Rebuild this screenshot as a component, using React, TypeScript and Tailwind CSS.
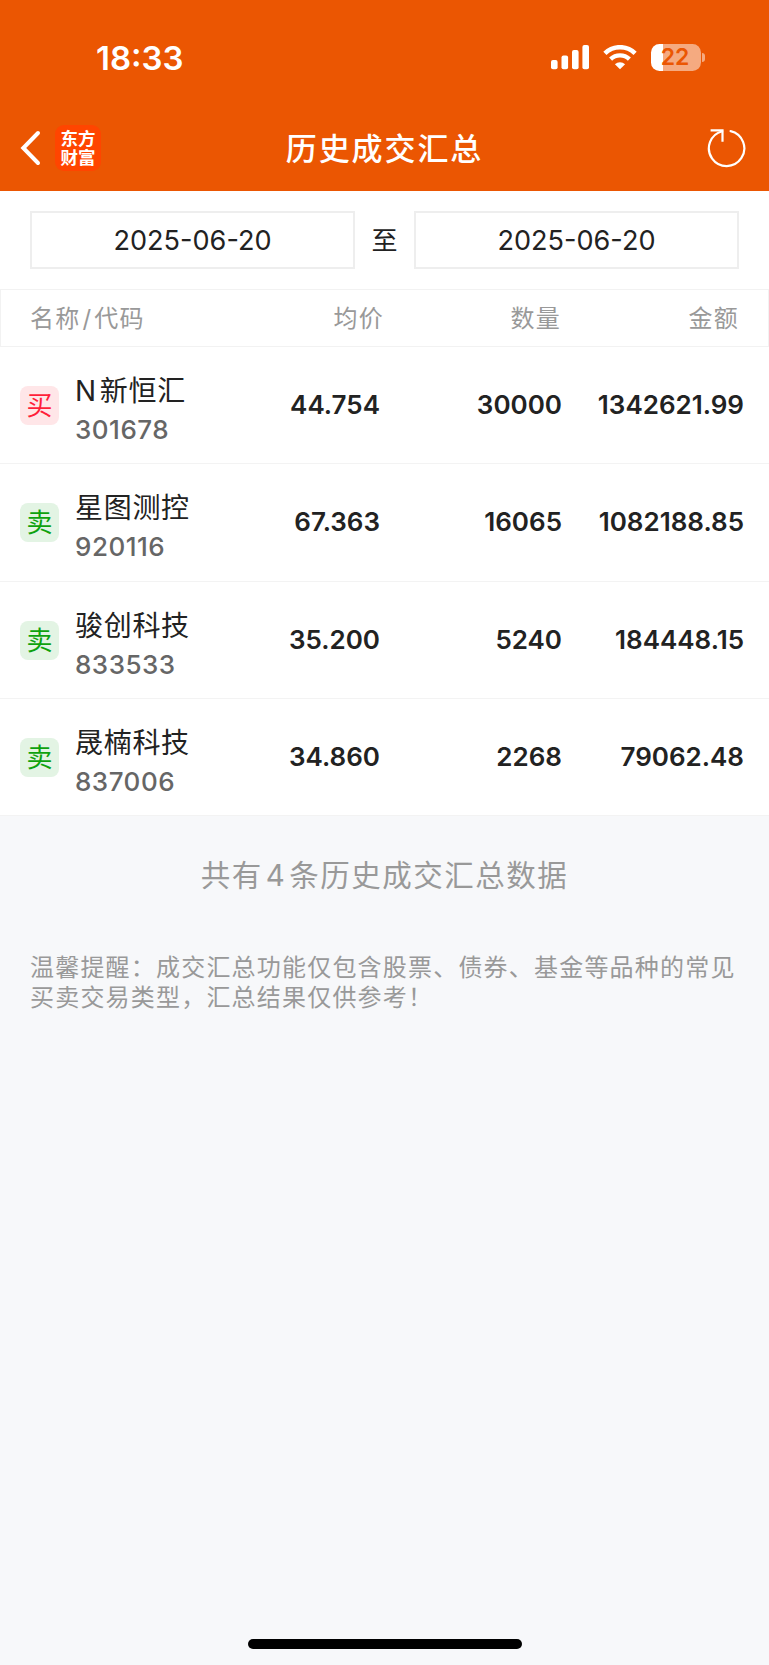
import clsx from "clsx";

interface Deal {
  side: "buy" | "sell";
  prefix?: string;
  name: string;
  code: string;
  price: string;
  count: string;
  amount: string;
}

const deals: Deal[] = [
  { side: "buy", prefix: "N", name: "新恒汇", code: "301678", price: "44.754", count: "30000", amount: "1342621.99" },
  { side: "sell", name: "星图测控", code: "920116", price: "67.363", count: "16065", amount: "1082188.85" },
  { side: "sell", name: "骏创科技", code: "833533", price: "35.200", count: "5240", amount: "184448.15" },
  { side: "sell", name: "晟楠科技", code: "837006", price: "34.860", count: "2268", amount: "79062.48" },
];

function StatusBar() {
  return (
    <div className="flex h-[104px] items-start justify-between pt-[44px] pr-[64px] pl-[96px] text-white">
      <span className="text-[33px] leading-[28px] font-semibold">18:33</span>
      <div className="flex items-start">
        <svg width="38" height="25" viewBox="0 0 38 25" fill="currentColor" className="mt-px">
          <rect x="0" y="15" width="6.6" height="9.3" rx="2" />
          <rect x="10.5" y="10.5" width="6.6" height="13.8" rx="2" />
          <rect x="21" y="5" width="6.6" height="19.3" rx="2" />
          <rect x="31.4" y="0" width="6.6" height="24.3" rx="2" />
        </svg>
        <svg width="34" height="25" viewBox="0 0 34 25" fill="none" stroke="currentColor" className="mt-px ml-[13.5px]">
          <path d="M1.9 8.3a21.8 21.8 0 0 1 30.2 0" strokeWidth="4.6" />
          <path d="M7.6 14.1a13.6 13.6 0 0 1 18.8 0" strokeWidth="4.4" />
          <path d="M17 24.3l-5.1-5.1a7.4 7.4 0 0 1 10.2 0z" fill="currentColor" stroke="none" />
        </svg>
        <div className="ml-[14.5px] flex items-center">
          <div className="flex h-[27px] w-[50px] items-center justify-center rounded-[8.5px] bg-linear-to-r from-white from-[24%] to-[#f5aa80] to-[24%]">
            <span className="mr-[2px] text-[23px] leading-[27px] font-semibold text-[#eb5602]">22</span>
          </div>
          <div className="ml-px h-[9px] w-[3px] rounded-r-full bg-[#f5aa80]" />
        </div>
      </div>
    </div>
  );
}

function NavBar() {
  return (
    <div className="flex h-[87px] items-center justify-between pt-[1px] pr-[22px] pl-[20px] text-white">
      <div className="flex w-[120px] items-center">
        <svg width="22" height="36" viewBox="0 0 22 36" fill="none" stroke="currentColor" strokeWidth="4" strokeLinecap="round" strokeLinejoin="miter">
          <path d="M18 3L3.3 18L18 33" />
        </svg>
        <div className="ml-[13px] flex h-[46px] w-[46px] flex-col items-center justify-center rounded-[9px] bg-[#ff4500] text-[17.5px] leading-[19px] font-bold">
          <span>东方</span>
          <span>财富</span>
        </div>
      </div>
      <h1 className="pt-[2px] pl-[2px] text-[31px] leading-[40px] font-medium tracking-[1.9px]">历史成交汇总</h1>
      <div className="flex w-[120px] justify-end">
        <svg width="40" height="42" viewBox="0 0 40 42" fill="none" stroke="currentColor" strokeWidth="2.2" className="mb-[2px]">
          <path d="M23.6 5.1A17.7 17.7 0 1 1 15.2 5.2" strokeLinecap="round" />
          <path d="M3.6 4.4H15.5V15.8" strokeLinejoin="miter" />
        </svg>
      </div>
    </div>
  );
}

function DateBox({ value }: { value: string }) {
  return (
    <div className="flex h-[58px] w-[325px] items-center justify-center border-2 border-[#eee] pt-[2px] text-[27.1px] leading-[34px]">
      {value}
    </div>
  );
}

function DealRow({ deal }: { deal: Deal }) {
  return (
    <div className="flex h-[117.3px] border-b border-[#f3f3f3] pl-[20px] text-[#222]">
      <div
        className={clsx(
          "mt-[39px] flex h-[39px] w-[39px] items-center justify-center rounded-[8px] pt-[1px] text-[26px] leading-[38px]",
          deal.side === "buy" ? "bg-[#ffe6e8] text-[#ff1f3a]" : "bg-[#e3f4e4] text-[#0ea20e]"
        )}
      >
        {deal.side === "buy" ? "买" : "卖"}
      </div>
      <div className="ml-[16px] w-[165px] pt-[25px]">
        <div className="text-[28px] leading-[38px] tracking-[0.7px]">
          {deal.prefix && <span className="mr-[3px]">{deal.prefix}</span>}
          {deal.name}
        </div>
        <div className="text-[26px] leading-[39px] font-medium tracking-[0.5px] text-[#666]">{deal.code}</div>
      </div>
      <div className="w-[140px] pt-[38px] text-right text-[26px] leading-[39px] font-semibold">{deal.price}</div>
      <div className="w-[182px] pt-[38px] text-right text-[26px] leading-[39px] font-semibold">{deal.count}</div>
      <div className="w-[182px] pt-[38px] text-right text-[26px] leading-[39px] font-semibold">{deal.amount}</div>
    </div>
  );
}

export default function App() {
  return (
    <div className="flex h-[1665px] w-[769px] flex-col bg-[#f7f8fa] font-['Inter','Noto_Sans_CJK_SC',sans-serif]">
      <header className="bg-[#eb5602]">
        <StatusBar />
        <NavBar />
      </header>

      <section className="flex h-[98px] items-center justify-between bg-white px-[30px] text-[#222]">
        <DateBox value="2025-06-20" />
        <span className="pt-[1px] text-[26px] leading-[34px]">至</span>
        <DateBox value="2025-06-20" />
      </section>

      <section className="bg-white">
        <div className="flex h-[58px] items-center border border-[#f2f2f2] pt-[2px] pl-[29px] text-[24px] tracking-[1.2px] text-[#999]">
          <span className="w-[200px]">
            名称<span className="mx-[2px]">/</span>代码
          </span>
          <span className="w-[154px] text-right">均价</span>
          <span className="w-[177px] text-right">数量</span>
          <span className="w-[178px] text-right">金额</span>
        </div>
        {deals.map((deal) => (
          <DealRow key={deal.code} deal={deal} />
        ))}
      </section>

      <p className="mt-[37px] text-center text-[29.5px] leading-[44px] tracking-[1.5px] text-[#999]">
        共有<span className="mx-[3px]">4</span>条历史成交汇总数据
      </p>
      <p className="mt-[56px] px-[30px] text-[24px] leading-[30px] tracking-[1.2px] text-[#999]">
        温馨提醒：成交汇总功能仅包含股票、债券、基金等品种的常见
        <br />
        买卖交易类型，汇总结果仅供参考！
      </p>

      <div className="mx-auto mt-auto mb-[16px] h-[10px] w-[274px] rounded-full bg-black" />
    </div>
  );
}
